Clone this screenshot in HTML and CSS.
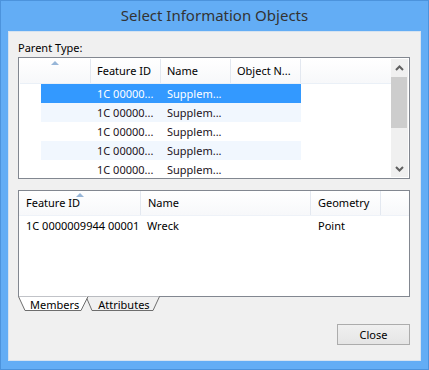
FILE: index.html
```html
<!DOCTYPE html>
<html lang="en">
<head>
<meta charset="UTF-8" />
<title>Select Information Objects</title>
<link rel="stylesheet" href="styles.css">
</head>
<body>
<div class="window">
  <div class="titlebar">Select Information Objects</div>

  <div class="client">
    <div class="label">Parent Type:</div>

    <!-- Parent type list -->
    <div class="listbox parent-list">
      <div class="list-main">
        <div class="header">
          <div class="hcol first"><span class="sort-arrow"></span></div>
          <div class="hcol w70">Feature ID</div>
          <div class="hcol w70">Name</div>
          <div class="hcol w70">Object N...</div>
          <div class="hcol fill"></div>
        </div>
        <div class="row selected"><span class="cell first"></span><span class="cell w70">1C 00000...</span><span class="cell w70">Supplem...</span><span class="cell w70"></span></div>
        <div class="row alt"><span class="cell first"></span><span class="cell w70">1C 00000...</span><span class="cell w70">Supplem...</span><span class="cell w70"></span></div>
        <div class="row"><span class="cell first"></span><span class="cell w70">1C 00000...</span><span class="cell w70">Supplem...</span><span class="cell w70"></span></div>
        <div class="row alt"><span class="cell first"></span><span class="cell w70">1C 00000...</span><span class="cell w70">Supplem...</span><span class="cell w70"></span></div>
        <div class="row"><span class="cell first"></span><span class="cell w70">1C 00000...</span><span class="cell w70">Supplem...</span><span class="cell w70"></span></div>
      </div>
      <div class="scrollbar">
        <div class="sb-btn">
          <svg width="9" height="6" viewBox="0 0 9 6"><path d="M1 5 L4.5 1.5 L8 5" fill="none" stroke="#606060" stroke-width="2"/></svg>
        </div>
        <div class="sb-track"><div class="sb-thumb"></div></div>
        <div class="sb-btn">
          <svg width="9" height="6" viewBox="0 0 9 6"><path d="M1 1 L4.5 4.5 L8 1" fill="none" stroke="#606060" stroke-width="2"/></svg>
        </div>
      </div>
    </div>

    <!-- Members list -->
    <div class="listbox members-list">
      <div class="header">
        <div class="hcol m-id">Feature ID<span class="sort-arrow"></span></div>
        <div class="hcol m-name">Name</div>
        <div class="hcol m-geom">Geometry</div>
        <div class="hcol fill"></div>
      </div>
      <div class="row plain"><span class="cell m-id">1C 0000009944 00001</span><span class="cell m-name">Wreck</span><span class="cell m-geom">Point</span></div>
    </div>

    <div class="tabs">
      <svg class="tab-lines" width="160" height="17" viewBox="0 0 160 17">
        <path d="M68 0.5 L74 14.5 L135 14.5 L141.5 0.5" fill="#f0f0f0" stroke="#6d6d6d"/>
        <path d="M0.5 0.5 L7 14.5 L63 14.5 L70 0.5" fill="#ffffff" stroke="#6d6d6d"/>
      </svg>
      <span class="tab">Members</span>
      <span class="tab">Attributes</span>
    </div>

    <div class="actions">
      <button class="btn">Close</button>
    </div>
  </div>
</div>
</body>
</html>
```

FILE: styles.css
```css
body {
  margin: 0;
  background: #ffffff;
}

.window {
  width: 429px;
  height: 370px;
  box-sizing: border-box;
  background: #63adf5;
  border: 1px solid #4c93dc;
  display: flex;
  flex-direction: column;
  font-family: "Noto Sans", "Open Sans", sans-serif;
  font-size: 11px;
  color: #000;
}

.titlebar {
  height: 30px;
  line-height: 28px;
  text-align: center;
  font-size: 15px;
  color: #333333;
}

.client {
  margin: 0 7px 8px 7px;
  flex: 1;
  background: #f0f0f0;
  border: 1px solid #d6e3f0;
  padding: 8px 10px 0 9px;
  display: flex;
  flex-direction: column;
}

.label {
  height: 16px;
  line-height: 16px;
  margin-bottom: 1px;
}

/* List boxes */
.listbox {
  background: #fff;
  border: 1px solid #828790;
  box-sizing: border-box;
}

.parent-list {
  height: 122px;
  display: flex;
  padding: 1px;
  box-shadow: inset 0 0 0 1px #fff;
}

.list-main {
  flex: 1;
  overflow: hidden;
}

.header {
  display: flex;
  height: 25px;
  box-sizing: border-box;
  border-bottom: 1px solid #eaf0f7;
  background: linear-gradient(#ffffff, #f7f8fa);
}

.hcol {
  position: relative;
  box-sizing: border-box;
  border-right: 1px solid #e3e8f0;
  padding-left: 6px;
  line-height: 23px;
  white-space: nowrap;
}

.hcol.fill {
  flex: 1;
  border-right: none;
}

.first {
  width: 71px;
}

.w70 {
  width: 70px;
}

.sort-arrow {
  position: absolute;
  top: 2px;
  left: 50%;
  margin-left: -4px;
  width: 0;
  height: 0;
  border-left: 4px solid transparent;
  border-right: 4px solid transparent;
  border-bottom: 4px solid #97b6d8;
}

.row {
  display: flex;
  height: 19px;
  line-height: 19px;
  margin-left: 21px;
  width: 260px;
  color: #221221;
}

.row .first {
  width: 50px;
}

.cell {
  box-sizing: border-box;
  padding-left: 6px;
  white-space: nowrap;
  overflow: hidden;
}

.row.alt {
  background: #f1f7fe;
}

.row.selected {
  background: #3399ff;
  color: #fff;
}

/* Scrollbar */
.scrollbar {
  width: 17px;
  display: flex;
  flex-direction: column;
  background: #f0f0f0;
}

.sb-btn {
  height: 17px;
  display: flex;
  align-items: center;
  justify-content: center;
}

.sb-track {
  flex: 1;
  padding: 1px 1px 0 0;
}

.sb-thumb {
  height: 51px;
  background: #cdcdcd;
}

/* Members list */
.members-list {
  margin-top: 11px;
  height: 107px;
}

.members-list .header {
  height: 25px;
  border-bottom: 1px solid #eef2f8;
}

.members-list .hcol {
  padding-left: 7px;
}

.members-list .sort-arrow {
  left: 61px;
}

.m-id {
  width: 122px;
}

.m-name {
  width: 170px;
}

.m-geom {
  width: 70px;
}

.row.plain {
  margin-left: 0;
  width: auto;
  height: 20px;
  line-height: 20px;
  color: #000;
}

.row.plain .cell {
  padding-left: 7px;
  overflow: visible;
}

.row.plain .m-name {
  padding-left: 6px;
}

/* Tabs under the members list */
.tabs {
  position: relative;
  height: 16px;
  display: flex;
  line-height: 15px;
}

.tab-lines {
  position: absolute;
  left: 0;
  top: -1px;
}

.tab {
  position: relative;
  margin-left: 12px;
}

.tab + .tab {
  margin-left: 19px;
}

/* Buttons */
.actions {
  display: flex;
  justify-content: flex-end;
  margin-top: 11px;
}

.btn {
  width: 73px;
  height: 21px;
  border: 1px solid #acacac;
  background: linear-gradient(#f0f0f0, #e5e5e5);
  font-family: "Noto Sans", "Open Sans", sans-serif;
  font-size: 11px;
  color: #000;
  padding: 0;
}
```
